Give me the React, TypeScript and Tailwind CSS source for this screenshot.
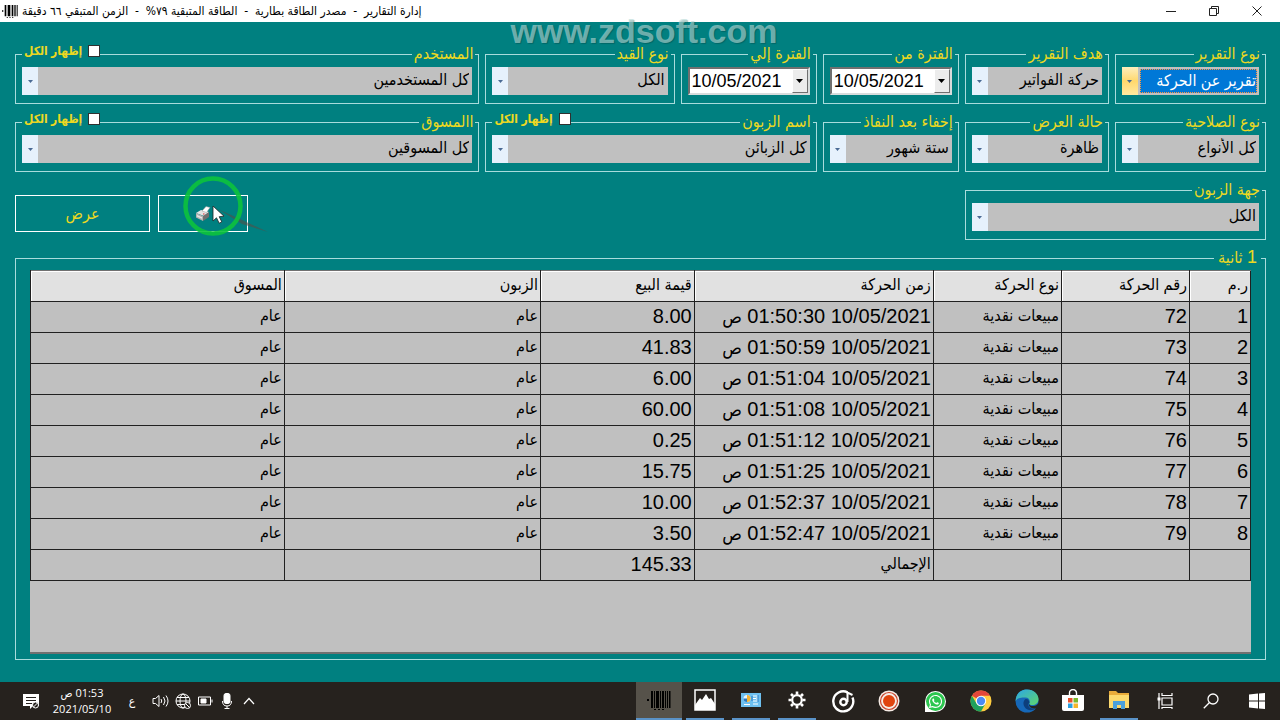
import React from "react";
import { FaWhatsapp } from "react-icons/fa";

interface Movement {
  id: number;
  number: string;
  type: string;
  time: string;
  amount: string;
  customer: string;
  marketer: string;
}

const SALE = "مبيعات نقدية";

const movements: Movement[] = [
  { id: 1, number: "72", type: SALE, time: "01:50:30", amount: "8.00", customer: "عام", marketer: "عام" },
  { id: 2, number: "73", type: SALE, time: "01:50:59", amount: "41.83", customer: "عام", marketer: "عام" },
  { id: 3, number: "74", type: SALE, time: "01:51:04", amount: "6.00", customer: "عام", marketer: "عام" },
  { id: 4, number: "75", type: SALE, time: "01:51:08", amount: "60.00", customer: "عام", marketer: "عام" },
  { id: 5, number: "76", type: SALE, time: "01:51:12", amount: "0.25", customer: "عام", marketer: "عام" },
  { id: 6, number: "77", type: SALE, time: "01:51:25", amount: "15.75", customer: "عام", marketer: "عام" },
  { id: 7, number: "78", type: SALE, time: "01:52:37", amount: "10.00", customer: "عام", marketer: "عام" },
  { id: 8, number: "79", type: SALE, time: "01:52:47", amount: "3.50", customer: "عام", marketer: "عام" },
];

const columns = [
  { label: "ر.م", width: "w-[5%]" },
  { label: "رقم الحركة", width: "w-[10.5%]" },
  { label: "نوع الحركة", width: "w-[10.5%]" },
  { label: "زمن الحركة", width: "w-[19.6%]" },
  { label: "قيمة البيع", width: "w-[12.6%]" },
  { label: "الزبون", width: "w-[21%]" },
  { label: "المسوق", width: "w-[20.8%]" },
];

interface GroupProps {
  title: string;
  showAll?: boolean;
  className?: string;
  children: React.ReactNode;
}

function Group({ title, showAll = false, className = "", children }: GroupProps) {
  return (
    <fieldset className={`relative min-w-0 border border-[#a8dcdc] ${className}`}>
      <legend className="mr-[3px] h-[22px] px-[2px] text-base leading-[22px] text-[#ecd822]">
        {title}
      </legend>
      {/* Sits on the frame's top line */}
      {showAll && (
        <label className="absolute -top-6 left-1.5 flex h-5 items-center gap-1.5 bg-[#008080] pl-0.5 text-xs font-bold leading-5 text-[#ecd822]">
          <input
            type="checkbox"
            className="h-3 w-3 appearance-none border border-[#303030] bg-white"
          />
          إظهار الكل
        </label>
      )}
      <div className="px-1.5 pb-2 pt-0.5">{children}</div>
    </fieldset>
  );
}

interface SelectBoxProps {
  label: string;
  value: string;
  active?: boolean;
}

function SelectBox({ label, value, active = false }: SelectBoxProps) {
  return (
    <div className="flex h-7 bg-[#c0c0c0]">
      <select
        aria-label={label}
        defaultValue={value}
        className={
          active
            ? "m-0.5 min-w-0 flex-1 appearance-none border border-dotted border-[#ff9a3c] bg-[#0078d7] text-base leading-5 text-white outline-none"
            : "min-w-0 flex-1 appearance-none bg-transparent pb-0.5 pr-[3px] text-base leading-5 text-black outline-none"
        }
      >
        <option>{value}</option>
      </select>
      <span
        className={
          active
            ? "flex w-4 items-center justify-center bg-linear-to-b from-[#fdeebb] via-[#ffd86b] to-[#ffe9a0]"
            : "flex w-4 items-center justify-center bg-[#e6f1fc]"
        }
      >
        <svg width="5" height="3" viewBox="0 0 5 3" fill="#4a6a94">
          <path d="M0 0h5L2.5 3z" />
        </svg>
      </span>
    </div>
  );
}

function DateBox({ label }: { label: string }) {
  return (
    <div dir="ltr" className="flex h-7 border-2 border-[#d8dcdc] border-l-[#707070] border-t-[#707070] bg-white">
      <input
        type="text"
        aria-label={label}
        defaultValue="10/05/2021"
        className="min-w-0 flex-1 bg-white pl-0.5 text-lg leading-6 text-black outline-none"
      />
      <button
        type="button"
        aria-label={label}
        className="flex w-4 items-center justify-center border border-b-[#707070] border-l-white border-r-[#707070] border-t-white bg-[#ececec]"
      >
        <svg width="7" height="4" viewBox="0 0 7 4">
          <path d="M0 0h7L3.5 4z" />
        </svg>
      </button>
    </div>
  );
}

function Barcode({ className = "" }: { className?: string }) {
  return (
    <svg className={className} viewBox="0 0 24 20" fill="#000">
      <path d="M0 9h2v2H0zM4 1h2v17H4zM7 1h1v17H7zM9 1h3v17H9zM13 1h1v17h-1zM15 1h2v17h-2zM18 1h1v17h-1zM20 1h1v17h-1zM22 1h1.500v17H22zM7 19h2v1H7zM11 19h2v1h-2zM15 19h2v1h-2z" />
    </svg>
  );
}

function TitleBar() {
  return (
    <header className="flex h-[22px] items-center justify-between bg-white">
      <div className="flex items-center gap-1 pl-0.5">
        <Barcode className="h-4 w-4" />
        <h1 dir="rtl" className="whitespace-pre font-['DejaVu_Sans_Condensed','DejaVu_Sans',sans-serif] text-xs leading-5 text-black">
          إدارة التقارير  -  مصدر الطاقة بطارية  -  الطاقة المتبقية ٧٩%  -  الزمن المتبقي ٦٦ دقيقة
        </h1>
      </div>
      <div className="flex pr-0.5">
        <button type="button" aria-label="تصغير" className="flex h-5 w-[43px] items-center justify-center">
          <svg width="10" height="10" stroke="#222" fill="none">
            <path d="M0 5.500h10" />
          </svg>
        </button>
        <button type="button" aria-label="استعادة" className="flex h-5 w-[43px] items-center justify-center">
          <svg width="10" height="10" stroke="#222" fill="none">
            <path d="M.5 2.500h7v7h-7zM2.500 2.500v-2h7v7h-2" />
          </svg>
        </button>
        <button type="button" aria-label="إغلاق" className="flex h-5 w-[43px] items-center justify-center">
          <svg width="10" height="10" stroke="#222" fill="none">
            <path d="M.5.5l9 9M9.500.5l-9 9" />
          </svg>
        </button>
      </div>
    </header>
  );
}

function PrinterIcon() {
  return (
    <svg width="16" height="16" viewBox="0 0 16 16">
      <path d="M1 7l5-3 8 2-5 4z" fill="#e4e4e4" />
      <path d="M7 5l4-4.500 4 1-3.500 5z" fill="#fff" stroke="#999" strokeWidth=".5" />
      <path d="M1 7l7 3v5l-7-3.500z" fill="#b4b4b4" />
      <path d="M8 10l6-4v5l-6 4z" fill="#707070" />
      <path d="M2 9l5 2.200v1.500L2 10.500z" fill="#e8e8e8" />
      <path d="M8 7.500h1.500v1H8z" fill="#d33" />
    </svg>
  );
}

function PointerHalo() {
  return (
    <svg
      className="pointer-events-none absolute -top-6 left-6 z-10 max-w-none"
      width="90"
      height="64"
      viewBox="1 0 90 64"
    >
      <path d="M36 37L58 47L86 60L60 52z" fill="#5b4a42" fillOpacity=".55" />
      <circle cx="31" cy="34" r="27.500" fill="none" stroke="#0cc23c" strokeOpacity=".9" strokeWidth="4.500" />
      <path d="M31 34v15l3.500-3.200 2.700 5.400 2.600-1.300-2.600-5.200 4.800-.5z" fill="#fff" stroke="#222" strokeWidth=".8" />
    </svg>
  );
}

function ReportTable() {
  const cell = "h-[31px] overflow-hidden whitespace-nowrap border border-[#202020] px-0.5 pb-0.5 pt-0 text-right";
  return (
    <table className="w-full table-fixed border-collapse text-black">
      <thead>
        <tr>
          {columns.map((column) => (
            <th
              key={column.label}
              scope="col"
              className={`${column.width} h-[31px] whitespace-nowrap border border-[#202020] border-t-[#707070] bg-[#e1e1e1] px-0.5 pb-0.5 pt-0 text-right text-base font-normal leading-5 shadow-[inset_1px_1px_0_#fff]`}
            >
              {column.label}
            </th>
          ))}
        </tr>
      </thead>
      <tbody className="text-xl leading-6">
        {movements.map((row) => (
          <tr key={row.id}>
            <td className={cell}>{row.id}</td>
            <td className={cell}>{row.number}</td>
            <td className={`${cell} text-base`}>{row.type}</td>
            <td className={cell}>
              10/05/2021 {row.time} <span className="text-lg leading-5">ص</span>
            </td>
            <td className={cell}>{row.amount}</td>
            <td className={`${cell} text-base`}>{row.customer}</td>
            <td className={`${cell} text-base`}>{row.marketer}</td>
          </tr>
        ))}
        <tr>
          <td className={cell} />
          <td className={cell} />
          <td className={cell} />
          <td className={`${cell} text-base`}>الإجمالي</td>
          <td className={cell}>145.33</td>
          <td className={cell} />
          <td className={cell} />
        </tr>
      </tbody>
    </table>
  );
}

function SystemTray() {
  return (
    <div className="flex items-center pl-[22px] text-white">
      <svg width="18" height="18" viewBox="0 0 18 18">
        <path d="M1 2h16v12h-6l-3 3v-3H1z" fill="#fff" />
        <path d="M4 5.500h10M4 8.500h10M4 11.500h6" stroke="#26221e" />
        <circle cx="13.500" cy="13" r="3" fill="#26221e" stroke="#fff" />
        <path d="M11.500 15l4-4" stroke="#fff" />
      </svg>
      <div dir="rtl" className="ml-3 w-[60px] text-center font-['Open_Sans','DejaVu_Sans_Condensed',sans-serif] text-[11px] leading-4">
        <div>01:53 ص</div>
        <div>2021/05/10</div>
      </div>
      <span className="ml-3 w-4 text-center text-xs">ع</span>
      <div className="ml-3 flex items-center gap-1.5">
        <svg width="17" height="16" viewBox="0 0 17 16" fill="none" stroke="#fff">
          <path d="M1 5.500h2.500L7 2.500v11l-3.500-3H1zM9 6q1.500 2 0 4M11.500 4q3 4 0 8M14 2.500q4 5.500 0 11" />
        </svg>
        <svg width="17" height="17" viewBox="0 0 17 17" fill="none" stroke="#fff">
          <circle cx="8" cy="8" r="7" />
          <ellipse cx="8" cy="8" rx="3" ry="7" />
          <path d="M1 8h14M2 4.500h12M2 11.500h12" />
          <circle cx="12.500" cy="12.500" r="3" fill="#26221e" />
          <path d="M10.500 10.500l4 4" />
        </svg>
        <svg width="15" height="10" viewBox="0 0 15 10" fill="none" stroke="#fff">
          <path d="M.5 1h12v8H.5zM14 3.500v3" />
          <path d="M3 3h5v4H3z" fill="#fff" />
        </svg>
        <svg width="16" height="16" viewBox="0 0 16 16" fill="none" stroke="#fff">
          <rect x="5" y=".5" width="6" height="10" rx="2" fill="#fff" />
          <path d="M3.500 8q0 5 4.500 5t4.500-5M8 13v2.500M5.500 15.500h5" />
        </svg>
        <svg className="ml-0.5" width="12" height="8" viewBox="0 0 12 8" fill="none" stroke="#fff" strokeWidth="1.200">
          <path d="M1 7l5-5.500L11 7" />
        </svg>
      </div>
    </div>
  );
}

interface AppItem {
  name: string;
  open?: boolean;
  current?: boolean;
  icon: React.ReactNode;
}

const apps: AppItem[] = [
  { name: "إدارة التقارير", open: true, current: true, icon: <Barcode className="h-5 w-6" /> },
  {
    name: "الصور",
    open: true,
    icon: (
      <svg width="22" height="22" viewBox="0 0 22 22">
        <path d="M1 1h20v20H1z" fill="#26221e" stroke="#fff" strokeWidth="1.500" />
        <path d="M1 16l5-7 2 2 4-6 3 5 2-1 4 6v6H1z" fill="#fff" />
      </svg>
    ),
  },
  {
    name: "لوحة التحكم",
    open: true,
    icon: (
      <svg width="20" height="16" viewBox="0 0 20 16">
        <path d="M0 1h20v14H0z" fill="#6ec0f0" />
        <circle cx="6" cy="6.500" r="3.500" fill="#e8f6ff" />
        <path d="M6 6.500V3a3.500 3.500 0 010 7z" fill="#f5b335" />
        <path d="M6 6.500h-3.500a3.500 3.500 0 003.500 3.500z" fill="#2678c4" />
        <path d="M12 4h3M12 6.500h3M12 9h3M3 12.500h6M12 12h5M16 3v7" stroke="#fff" />
        <path d="M17 3v7M11 4v5" stroke="#2678c4" />
      </svg>
    ),
  },
  {
    name: "الإعدادات",
    open: true,
    icon: (
      <svg width="18" height="18" viewBox="0 0 18 18" fill="none" stroke="#fff">
        <circle cx="9" cy="9" r="4.800" strokeWidth="2.200" />
        <path d="M9 .5v3M9 14.500v3M.5 9h3M14.500 9h3M3 3l2 2M13 13l2 2M3 15l2-2M13 5l2-2" strokeWidth="2.600" />
      </svg>
    ),
  },
  {
    name: "الموسيقى",
    icon: (
      <svg width="23" height="23" viewBox="0 0 23 23" fill="none" stroke="#fff">
        <path d="M15.500 2.300A10 10 0 1020.500 7.500" strokeWidth="2.400" />
        <circle cx="11.500" cy="12" r="3.200" strokeWidth="2.400" />
        <path d="M15.500 12V2.500l5 2.500" strokeWidth="2" />
      </svg>
    ),
  },
  {
    name: "المسجل",
    icon: (
      <svg width="22" height="22" viewBox="0 0 22 22">
        <circle cx="11" cy="11" r="10.500" fill="#f6ece6" />
        <circle cx="11" cy="11" r="8.500" fill="none" stroke="#c9452b" strokeWidth="1.200" />
        <circle cx="11" cy="11" r="6" fill="#e0440e" />
      </svg>
    ),
  },
  {
    name: "واتساب",
    icon: (
      <span className="flex h-[21px] w-[21px] items-center justify-center rounded-full rounded-bl-sm bg-white">
        <span className="flex h-[19px] w-[19px] items-center justify-center rounded-full bg-[#2cc64f] text-white">
          <FaWhatsapp size={15} />
        </span>
      </span>
    ),
  },
  {
    name: "كروم",
    icon: (
      <svg width="22" height="22" viewBox="0 0 22 22">
        <circle cx="11" cy="11" r="10.500" fill="#ffcd40" />
        <path d="M11 11L1.900 5.750A10.500 10.500 0 0120.100 5.750H11z" fill="#e2473a" />
        <path d="M1.900 5.750A10.500 10.500 0 0011 21.500L15.500 13.600 11 11l-4.500 2.600z" fill="#1fa15d" />
        <circle cx="11" cy="11" r="5.200" fill="#fff" />
        <circle cx="11" cy="11" r="4.200" fill="#4a8af4" />
      </svg>
    ),
  },
  {
    name: "إيدج",
    icon: (
      <svg width="24" height="24" viewBox="0 0 24 24">
        <defs>
          <linearGradient id="edge-top" x1="0" x2="1" y1="0" y2="1">
            <stop offset="0" stopColor="#2ba7e8" />
            <stop offset="1" stopColor="#5fd66b" />
          </linearGradient>
        </defs>
        <circle cx="12" cy="12" r="11.500" fill="#1668b8" />
        <path d="M.6 12C1 4 6 .5 12 .5c7 0 11.500 5 11.500 9.500 0 4-3 6-6 6-2 0-3.500-.8-3-2 1-2.500-.5-5.500-4-5.500C6 8.500 2 9 .6 12z" fill="url(#edge-top)" />
        <path d="M10.500 10c-3 2-3 8 2 10.500 3 1.400 6 .5 8-1-6 1-9-3-6-6-.5-2-1.500-4-4-3.500z" fill="#0d3f7c" />
        <path d="M14.500 13.500c-1.500 2 1 3.800 4 3.500 2 0 4-1 5-3l2 6-4-.5c-5 .5-9-2-7-6z" fill="#26221e" />
      </svg>
    ),
  },
  {
    name: "المتجر",
    icon: (
      <svg width="24" height="24" viewBox="0 0 24 24">
        <path d="M8.500 6V4a3.500 3.500 0 017 0v2" fill="none" stroke="#fff" strokeWidth="1.400" />
        <path d="M1 6h22v14q0 2-2 2H3q-2 0-2-2z" fill="#fff" />
        <path d="M7 9h4.500v4.500H7z" fill="#e8502c" />
        <path d="M12.500 9H17v4.500h-4.500z" fill="#7ab82d" />
        <path d="M7 14.500h4.500V19H7z" fill="#2a9fe0" />
        <path d="M12.500 14.500H17V19h-4.500z" fill="#f6b52a" />
      </svg>
    ),
  },
  {
    name: "مستكشف الملفات",
    open: true,
    icon: (
      <svg width="22" height="20" viewBox="0 0 22 20">
        <path d="M1 1h7l2 2h11v4H1z" fill="#e8ab3a" />
        <path d="M1 5h20v13H1z" fill="#fbd96e" />
        <path d="M5 19v-8h12v8h-4v-4H9v4z" fill="#4aa0dc" />
      </svg>
    ),
  },
  {
    name: "عرض المهام",
    icon: (
      <svg width="16" height="16" viewBox="0 0 16 16" fill="none" stroke="#fff" strokeWidth="1.200">
        <path d="M5 5h10v7H5zM5 0v2.500h10V0M5 16v-1.500h10V16M2 0v16" />
        <path d="M.5 4.500h3v3h-3z" fill="#fff" stroke="none" />
      </svg>
    ),
  },
  {
    name: "بحث",
    icon: (
      <svg width="16" height="16" viewBox="0 0 16 16" fill="none" stroke="#fff" strokeWidth="1.300">
        <circle cx="10" cy="6" r="5" />
        <path d="M6.500 9.500L.8 15.200" />
      </svg>
    ),
  },
  {
    name: "ابدأ",
    icon: (
      <svg width="16" height="16" viewBox="0 0 16 16" fill="#fff">
        <path d="M0 1.500l9-1v7H0zM10 .4L16 0v7.500h-6zM0 8.500h9v7l-9-1zM10 8.500h6V16l-6-.5z" />
      </svg>
    ),
  },
];

function Taskbar() {
  return (
    <footer className="flex h-[38px] justify-between bg-[#26221e]">
      <SystemTray />
      <nav className="flex">
        {apps.map((app) => (
          <button
            key={app.name}
            type="button"
            aria-label={app.name}
            className={`flex w-[46px] flex-col items-center ${app.current ? "bg-[#56524a]" : ""}`}
          >
            <span className="flex flex-1 items-center justify-center">{app.icon}</span>
            {app.open && <span className={`h-0.5 bg-[#5a93c8] ${app.current ? "w-full" : "w-[38px]"}`} />}
          </button>
        ))}
      </nav>
    </footer>
  );
}

function App() {
  return (
    <div className="relative flex min-h-screen flex-col bg-[#008080] font-['Liberation_Sans','DejaVu_Sans_Condensed','DejaVu_Sans',sans-serif]">
      <TitleBar />

      {/* Watermark */}
      <div className="pointer-events-none absolute inset-x-0 top-[19px] pl-2 text-center text-[34px] font-bold leading-6 text-[#b8dcd8]/60 [text-shadow:1px_1px_1px_rgba(0,60,60,0.35)]">
        www.zdsoft.com
      </div>

      <main dir="rtl" className="flex flex-1 flex-col gap-[7px] pb-[22px] pl-[15px] pr-3.5 pt-[21px]">
        <div className="grid grid-cols-[151fr_144fr_136fr_136fr_189fr_464fr] gap-x-1.5 gap-y-[7px]">
          <Group title="نوع التقرير">
            <SelectBox label="نوع التقرير" value="تقرير عن الحركة" active />
          </Group>
          <Group title="هدف التقرير">
            <SelectBox label="هدف التقرير" value="حركة الفواتير" />
          </Group>
          <Group title="الفترة من">
            <DateBox label="الفترة من" />
          </Group>
          <Group title="الفترة إلي">
            <DateBox label="الفترة إلي" />
          </Group>
          <Group title="نوع القيد">
            <SelectBox label="نوع القيد" value="الكل" />
          </Group>
          <Group title="المستخدم" showAll>
            <SelectBox label="المستخدم" value="كل المستخدمين" />
          </Group>

          <Group title="نوع الصلاحية">
            <SelectBox label="نوع الصلاحية" value="كل الأنواع" />
          </Group>
          <Group title="حالة العرض">
            <SelectBox label="حالة العرض" value="ظاهرة" />
          </Group>
          <Group title="إخفاء بعد النفاذ">
            <SelectBox label="إخفاء بعد النفاذ" value="ستة شهور" />
          </Group>
          <Group title="اسم الزبون" showAll className="col-span-2">
            <SelectBox label="اسم الزبون" value="كل الزبائن" />
          </Group>
          <Group title="االمسوق" showAll>
            <SelectBox label="االمسوق" value="كل المسوقين" />
          </Group>

          <Group title="جهة الزبون" className="col-span-2">
            <SelectBox label="جهة الزبون" value="الكل" />
          </Group>
          <div className="col-start-6 flex items-start justify-end gap-2 pt-4">
            <button
              type="button"
              aria-label="طباعة"
              className="relative flex h-[37px] w-[90px] items-center justify-center border border-white"
            >
              <PrinterIcon />
              <PointerHalo />
            </button>
            <button
              type="button"
              className="h-[37px] w-[135px] border border-white text-base text-[#ecd822]"
            >
              عرض
            </button>
          </div>
        </div>

        {/* Results */}
        <section className="mt-[11px] flex flex-1 flex-col border border-[#a8dcdc] px-3.5 pb-[5px]">
          <h2 className="-mr-2.5 -mt-3 h-[23px] self-start bg-[#008080] px-1 text-base leading-[22px] text-[#ecd822]">
            <span className="text-lg leading-5">1</span> ثانية
          </h2>
          <div className="flex-1 border-b-2 border-[#707070] bg-[#c0c0c0]">
            <ReportTable />
          </div>
        </section>
      </main>

      <Taskbar />
    </div>
  );
}

export default App;
